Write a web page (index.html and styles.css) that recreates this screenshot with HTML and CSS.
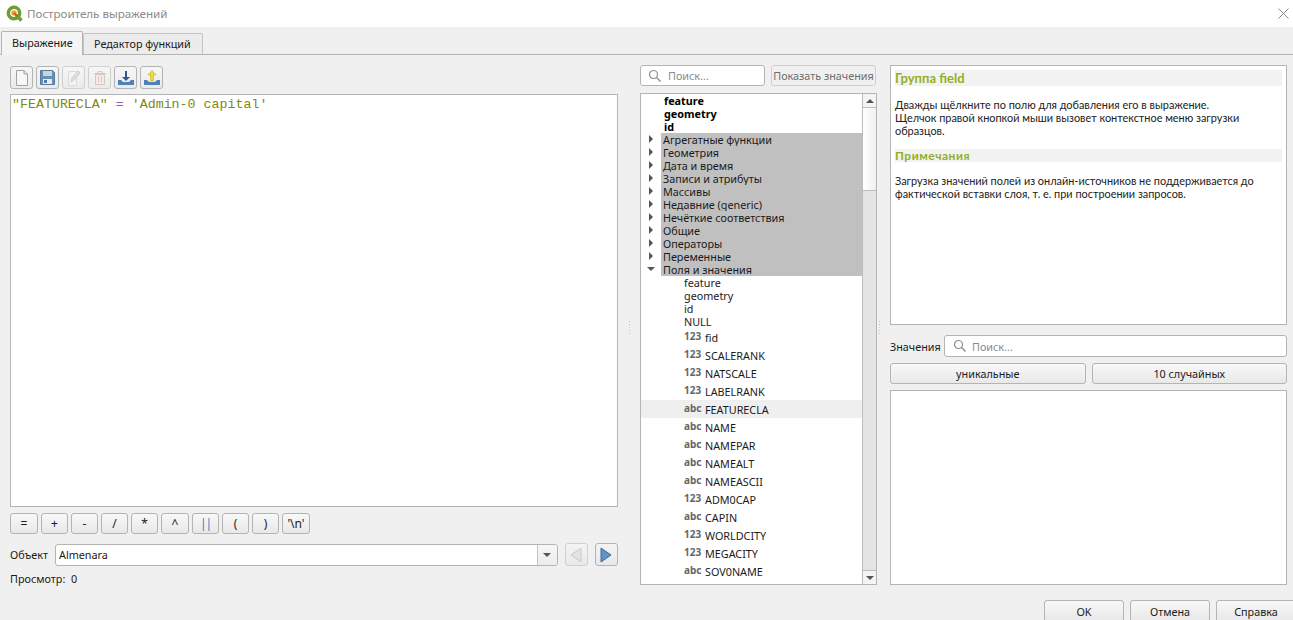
FILE: index.html
```html
<!DOCTYPE html>
<html lang="ru">
<head>
    <meta charset="UTF-8">
    <title>Построитель выражений</title>
    <link rel="stylesheet" href="styles.css">
</head>
<body>
    <div class="dialog">
        <!-- Заголовок окна -->
        <header class="titlebar">
            <svg class="logo" width="17" height="17" viewBox="0 0 17 17">
                <circle cx="8" cy="8" r="5.700" fill="#fff" stroke="#6f9e2e" stroke-width="3.400"/>
                <path d="M10 10l5.500 5.500" stroke="#6f9e2e" stroke-width="3.400"/>
                <circle cx="8" cy="8" r="2.800" fill="#e8a33d"/>
                <path d="M8 8l3 3" stroke="#c9473a" stroke-width="1.500"/>
            </svg>
            <span class="title">Построитель выражений</span>
            <svg class="close" width="11" height="11" viewBox="0 0 11 11">
                <path d="M0.500 0.500l10 10M10.500 0.500l-10 10" stroke="#8a8a8a" stroke-width="1" fill="none"/>
            </svg>
        </header>

        <nav class="tabs">
            <div class="tab active">Выражение</div>
            <div class="tab">Редактор функций</div>
        </nav>

        <main class="content">
            <!-- Редактор -->
            <section class="col-editor">
                <div class="toolbar">
                    <button class="tool" type="button">
                        <svg width="14" height="18" viewBox="0 0 14 18"><path d="M1.500 1.500h7.500l3.500 3.500v11.500h-11z" fill="#f7f7f7" stroke="#a2a2a2"/><path d="M9 1.500v3.500h3.500" fill="#e2e2e2" stroke="#a2a2a2"/></svg>
                    </button>
                    <button class="tool" type="button">
                        <svg width="17" height="17" viewBox="0 0 17 17"><path d="M1.500 1.500h12l2 2v12h-14z" fill="#6a8fb6" stroke="#557aa1"/><rect x="4" y="2" width="9" height="5" fill="#cdd3da"/><rect x="4" y="10" width="9" height="5" fill="#e9ecef"/><rect x="5" y="11" width="3" height="3" fill="#557aa1"/></svg>
                    </button>
                    <button class="tool off" type="button">
                        <svg width="15" height="18" viewBox="0 0 15 18"><path d="M2.500 2.500h8v14h-8z" fill="#f4f4f4" stroke="#dadada"/><path d="M5 13l1-4 6-7 2 2-6 7z" fill="#dedede" stroke="#cecece"/></svg>
                    </button>
                    <button class="tool off" type="button">
                        <svg width="16" height="18" viewBox="0 0 16 18"><path d="M2 4.500h12M6 4V2.500h4V4" fill="none" stroke="#d8c6c3"/><path d="M3.500 5.500h9v10h-9z" fill="#f2ecea" stroke="#d8c6c3"/><path d="M6.500 7.500v6M9.500 7.500v6" stroke="#d8c6c3"/></svg>
                    </button>
                    <button class="tool" type="button">
                        <svg width="18" height="18" viewBox="0 0 18 18"><path d="M8 2h2v6h3l-4 4-4-4h3z" fill="#2d5a8a"/><path d="M1 11h3l2 2h6l2-2h3v5H1z" fill="#4f82b6"/></svg>
                    </button>
                    <button class="tool" type="button">
                        <svg width="18" height="18" viewBox="0 0 18 18"><path d="M7.500 12V6H5l4-4.500L13 6h-2.500v6z" fill="#ecd93c" stroke="#b8a92c" stroke-width=".5"/><path d="M1 11h3l2 2h6l2-2h3v5H1z" fill="#4f82b6"/></svg>
                    </button>
                </div>

                <div class="editor"><span class="code-str">"FEATURECLA"</span> <span class="code-op">=</span> <span class="code-val">'Admin-0 capital'</span></div>

                <div class="ops">
                    <button class="op op-wide" type="button">=</button>
                    <button class="op" type="button">+</button>
                    <button class="op" type="button">-</button>
                    <button class="op" type="button">/</button>
                    <button class="op" type="button">*</button>
                    <button class="op op-wide" type="button">^</button>
                    <button class="op op-pipe" type="button">||</button>
                    <button class="op" type="button">(</button>
                    <button class="op" type="button">)</button>
                    <button class="op op-wide" type="button">'\n'</button>
                </div>

                <div class="feature-row">
                    <span>Объект</span>
                    <div class="combo">
                        <span class="combo-text">Almenara</span>
                        <span class="combo-btn"><i class="arrow-down"></i></span>
                    </div>
                    <button class="nav-btn off" type="button">
                        <svg width="12" height="16" viewBox="0 0 12 16"><path d="M11 1v14L1 8z" fill="#dfe3e6" stroke="#c6cace"/></svg>
                    </button>
                    <button class="nav-btn" type="button">
                        <svg width="12" height="16" viewBox="0 0 12 16"><path d="M1 1v14l10-7z" fill="#5f93c8" stroke="#3f6a99"/></svg>
                    </button>
                </div>

                <div class="preview">Просмотр:&nbsp; 0</div>
            </section>

            <div class="splitter"></div>

            <!-- Дерево функций -->
            <section class="col-tree">
                <div class="search-row">
                    <label class="search search-tree">
                        <svg width="14" height="14" viewBox="0 0 14 14"><circle cx="5.500" cy="5.500" r="4" fill="none" stroke="#8c8c8c" stroke-width="1.200"/><path d="M8.500 8.500l4 4" stroke="#8c8c8c" stroke-width="1.500"/></svg>
                        <span>Поиск...</span>
                    </label>
                    <button class="show-values" type="button">Показать значения</button>
                </div>

                <div class="tree">
                    <ul class="tree-list">
                        <li class="row lvl bold">feature</li>
                        <li class="row lvl bold">geometry</li>
                        <li class="row lvl bold">id</li>
                        <li class="row lvl group"><i class="arrow-right"></i><span>Агрегатные функции</span></li>
                        <li class="row lvl group"><i class="arrow-right"></i><span>Геометрия</span></li>
                        <li class="row lvl group"><i class="arrow-right"></i><span>Дата и время</span></li>
                        <li class="row lvl group"><i class="arrow-right"></i><span>Записи и атрибуты</span></li>
                        <li class="row lvl group"><i class="arrow-right"></i><span>Массивы</span></li>
                        <li class="row lvl group"><i class="arrow-right"></i><span>Недавние (generic)</span></li>
                        <li class="row lvl group"><i class="arrow-right"></i><span>Нечёткие соответствия</span></li>
                        <li class="row lvl group"><i class="arrow-right"></i><span>Общие</span></li>
                        <li class="row lvl group"><i class="arrow-right"></i><span>Операторы</span></li>
                        <li class="row lvl group"><i class="arrow-right"></i><span>Переменные</span></li>
                        <li class="row lvl group"><i class="arrow-open"></i><span>Поля и значения</span></li>
                        <li class="row sub">feature</li>
                        <li class="row sub">geometry</li>
                        <li class="row sub">id</li>
                        <li class="row sub">NULL</li>
                        <li class="field"><b>123</b>fid</li>
                        <li class="field"><b>123</b>SCALERANK</li>
                        <li class="field"><b>123</b>NATSCALE</li>
                        <li class="field"><b>123</b>LABELRANK</li>
                        <li class="field hover"><b>abc</b>FEATURECLA</li>
                        <li class="field"><b>abc</b>NAME</li>
                        <li class="field"><b>abc</b>NAMEPAR</li>
                        <li class="field"><b>abc</b>NAMEALT</li>
                        <li class="field"><b>abc</b>NAMEASCII</li>
                        <li class="field"><b>123</b>ADM0CAP</li>
                        <li class="field"><b>abc</b>CAPIN</li>
                        <li class="field"><b>123</b>WORLDCITY</li>
                        <li class="field"><b>123</b>MEGACITY</li>
                        <li class="field"><b>abc</b>SOV0NAME</li>
                    </ul>
                    <div class="scrollbar">
                        <span class="sb-btn sb-btn-up"><i class="arrow-up"></i></span>
                        <span class="sb-thumb"></span>
                        <span class="sb-track"></span>
                        <span class="sb-btn sb-btn-down"><i class="arrow-down"></i></span>
                    </div>
                </div>
            </section>

            <div class="splitter splitter-right"></div>

            <!-- Справка и значения -->
            <section class="col-help">
                <div class="help">
                    <h2>Группа field</h2>
                    <p>Дважды щёлкните по полю для добавления его в выражение.<br>Щелчок правой кнопкой мыши вызовет контекстное меню загрузки образцов.</p>
                    <h3>Примечания</h3>
                    <p>Загрузка значений полей из онлайн-источников не поддерживается до фактической вставки слоя, т. е. при построении запросов.</p>
                </div>

                <div class="values-row">
                    <span class="values-label">Значения</span>
                    <label class="search search-values">
                        <svg width="14" height="14" viewBox="0 0 14 14"><circle cx="5.500" cy="5.500" r="4" fill="none" stroke="#8c8c8c" stroke-width="1.200"/><path d="M8.500 8.500l4 4" stroke="#8c8c8c" stroke-width="1.500"/></svg>
                        <span>Поиск...</span>
                    </label>
                </div>

                <div class="values-btns">
                    <button class="btn" type="button">уникальные</button>
                    <button class="btn" type="button">10 случайных</button>
                </div>

                <div class="values-list"></div>
            </section>
        </main>

        <footer class="actions">
            <button class="btn btn-action" type="button">OK</button>
            <button class="btn btn-action" type="button">Отмена</button>
            <button class="btn btn-action" type="button">Справка</button>
        </footer>
    </div>
</body>
</html>
```

FILE: styles.css
```css
/* Общее */
html, body {
    margin: 0;
    padding: 0;
    height: 100%;
    overflow: hidden;
}

body {
    font-family: "Noto Sans", "Open Sans", sans-serif;
    font-size: 10.8px;
    color: #1a1a1a;
    background: #f0f0f0;
}

button {
    font: inherit;
    color: inherit;
    padding: 0;
    cursor: pointer;
}

.dialog {
    height: 620px;
    display: flex;
    flex-direction: column;
}

/* Заголовок окна */
.titlebar {
    height: 27px;
    flex: none;
    background: #fff;
    display: flex;
    align-items: center;
    padding: 0 4px 0 6px;
    box-sizing: border-box;
}

.title {
    margin-left: 4px;
    font-size: 11.6px;
    color: #8a8a8a;
    flex: 1;
}

/* Вкладки */
.tabs {
    height: 28px;
    flex: none;
    display: flex;
    align-items: flex-end;
    padding-left: 1px;
    border-bottom: 1px solid #b4b4b4;
    box-sizing: border-box;
}

.tab {
    height: 21px;
    line-height: 20px;
    padding-left: 10px;
    background: #ececec;
    border: 1px solid #c4c4c4;
    border-bottom: none;
    border-radius: 2px 2px 0 0;
    box-sizing: border-box;
    width: 120px;
    white-space: nowrap;
}

.tab.active {
    width: 82px;
    height: 24px;
    margin-bottom: -1px;
    line-height: 22px;
    background: #f4f4f4;
    border-color: #b4b4b4;
}

/* Колонки */
.content {
    flex: 1;
    min-height: 0;
    display: flex;
    padding: 10px 6px 0 10px;
}

.col-editor {
    width: 608px;
    flex: none;
    padding-top: 1px;
    display: flex;
    flex-direction: column;
}

.col-tree {
    width: 237px;
    flex: none;
    display: flex;
    flex-direction: column;
}

.col-help {
    flex: 1;
    min-width: 0;
    display: flex;
    flex-direction: column;
}

.splitter {
    width: 22px;
    flex: none;
    display: flex;
    align-items: center;
    justify-content: center;
}

.splitter::before {
    content: "";
    width: 1px;
    height: 14px;
    margin-bottom: 10px;
    background: repeating-linear-gradient(to bottom, #c4c4c4 0 1px, transparent 1px 3px);
}

.splitter-right {
    width: 13px;
    justify-content: flex-start;
    padding-left: 2px;
    box-sizing: border-box;
}

/* Панель инструментов */
.toolbar {
    display: flex;
    gap: 3px;
    height: 23px;
    flex: none;
}

.tool {
    width: 23px;
    height: 23px;
    background: linear-gradient(to bottom, #f6f6f6, #ebebeb);
    border: 1px solid #b4b4b4;
    border-radius: 3px;
    display: flex;
    align-items: center;
    justify-content: center;
}

.tool.off {
    border-color: #d0d0d0;
}

/* Редактор */
.editor {
    height: 413px;
    flex: none;
    margin-top: 5px;
    background: #fff;
    border: 1px solid #b4b4b4;
    box-sizing: border-box;
    padding: 2px 1px;
    font-family: "Liberation Mono", "DejaVu Sans Mono", monospace;
    font-size: 13.3px;
    line-height: 15px;
}

.code-str,
.code-val {
    color: #7f8a0c;
}

.code-op {
    color: #8e5fc0;
}

/* Кнопки операторов */
.ops {
    display: flex;
    gap: 3px;
    margin-top: 6px;
    flex: none;
}

.op {
    width: 27px;
    height: 21px;
    background: linear-gradient(to bottom, #f8f8f8, #e8e8e8);
    border: 1px solid #b4b4b4;
    border-radius: 3px;
    font-size: 12px;
}

.op-wide {
    width: 28px;
}

.op-pipe {
    color: #2f7fc4;
    letter-spacing: -1px;
}

/* Строка объекта */
.feature-row {
    display: flex;
    align-items: center;
    margin-top: 9px;
    flex: none;
}

.combo {
    width: 503px;
    height: 22px;
    margin-left: 7px;
    display: flex;
    background: #fff;
    border: 1px solid #b4b4b4;
    border-radius: 3px;
    box-sizing: border-box;
}

.combo-text {
    flex: 1;
    line-height: 20px;
    padding-left: 3px;
}

.combo-btn {
    width: 19px;
    border-left: 1px solid #c4c4c4;
    background: linear-gradient(to bottom, #f6f6f6, #ececec);
    border-radius: 0 3px 3px 0;
    display: flex;
    align-items: center;
    justify-content: center;
}

.nav-btn {
    width: 23px;
    height: 23px;
    margin-left: 7px;
    background: linear-gradient(to bottom, #f4f4f4, #e8e8e8);
    border: 1px solid #b4b4b4;
    border-radius: 3px;
    display: flex;
    align-items: center;
    justify-content: center;
}

.nav-btn.off {
    border-color: #d0d0d0;
}

.preview {
    margin-top: 5px;
    line-height: 15px;
    flex: none;
}

/* Стрелки */
.arrow-down,
.arrow-up,
.arrow-open {
    display: block;
    width: 0;
    height: 0;
    border-left: 4px solid transparent;
    border-right: 4px solid transparent;
}

.arrow-down,
.arrow-open {
    border-top: 4px solid #555;
}

.arrow-up {
    border-bottom: 4px solid #555;
}

.arrow-right {
    display: block;
    width: 0;
    height: 0;
    border-top: 4px solid transparent;
    border-bottom: 4px solid transparent;
    border-left: 4px solid #555;
}

/* Поиск */
.search {
    height: 21px;
    display: flex;
    align-items: center;
    gap: 6px;
    padding-left: 7px;
    background: #fff;
    border: 1px solid #b4b4b4;
    border-radius: 3px;
    box-sizing: border-box;
    color: #8a8a8a;
}

.search-tree {
    width: 125px;
}

.search-values {
    flex: 1;
    height: 22px;
    gap: 5px;
    padding-left: 8px;
}

.search-row {
    display: flex;
    gap: 6px;
    flex: none;
}

.show-values {
    width: 105px;
    height: 21px;
    color: #6e6e6e;
    background: #f0f0f0;
    border: 1px solid #cfcfcf;
    border-radius: 3px;
}

/* Дерево */
.tree {
    height: 492px;
    margin-top: 7px;
    display: flex;
    background: #fff;
    border: 1px solid #b4b4b4;
    box-sizing: border-box;
    flex: none;
}

.tree-list {
    list-style: none;
    margin: 0;
    padding: 0;
    flex: 1;
    min-width: 0;
    overflow: hidden;
}

.row {
    height: 13px;
    line-height: 13px;
    margin-top: 0;
}

.lvl {
    padding-left: 23px;
}

.bold {
    font-weight: 700;
    color: #000;
}

.group {
    position: relative;
    padding-left: 0;
    margin-left: 20px;
    background: #c0c0c0;
}

.group span {
    padding-left: 2px;
}

.group i {
    position: absolute;
    left: -12px;
    top: 2px;
}

.group .arrow-open {
    left: -14px;
    top: 4px;
}

.sub {
    padding-left: 43px;
}

.field {
    height: 18px;
    line-height: 20px;
    padding-left: 43px;
    display: flex;
}

.field b {
    width: 21px;
    flex: none;
    font-size: 10px;
    line-height: 17px;
    color: #666;
}

.field.hover {
    background: #efefef;
}

/* Полоса прокрутки */
.scrollbar {
    width: 14px;
    flex: none;
    display: flex;
    flex-direction: column;
    box-sizing: border-box;
    border-left: 1px solid #bcbcbc;
    background: #e4e4e4;
}

.sb-btn {
    height: 13px;
    flex: none;
    background: #f4f4f4;
    display: flex;
    align-items: center;
    justify-content: center;
}

.sb-btn-up {
    border-bottom: 1px solid #bcbcbc;
}

.sb-btn-down {
    border-top: 1px solid #bcbcbc;
}

.sb-thumb {
    height: 83px;
    flex: none;
    background: linear-gradient(to right, #fff, #f0f0f0);
    border-bottom: 1px solid #bcbcbc;
    box-sizing: border-box;
}

.sb-track {
    flex: 1;
}

/* Справка */
.help {
    height: 260px;
    flex: none;
    background: #fff;
    border: 1px solid #b4b4b4;
    box-sizing: border-box;
    padding: 4px 4px;
    font-family: Lato, "Noto Sans", sans-serif;
    font-size: 10.9px;
    line-height: 13px;
    color: #222;
}

.help h2 {
    margin: 0;
    height: 16px;
    line-height: 16px;
    font-size: 13px;
    font-weight: 700;
    color: #93b023;
    background: #f2f2f2;
}

.help h3 {
    margin: 12px 0 0;
    height: 13px;
    line-height: 13px;
    font-size: 12px;
    letter-spacing: .5px;
    font-weight: 700;
    color: #93b023;
    background: #f2f2f2;
}

.help p {
    margin: 12px 0 0;
}

.values-row {
    display: flex;
    align-items: center;
    gap: 6px;
    margin-top: 10px;
    flex: none;
}

.values-label {
    width: 48px;
    flex: none;
}

.values-btns {
    display: flex;
    gap: 6px;
    margin-top: 6px;
    flex: none;
}

.btn {
    height: 21px;
    background: linear-gradient(to bottom, #f8f8f8, #e8e8e8);
    border: 1px solid #b4b4b4;
    border-radius: 3px;
}

.values-btns .btn {
    flex: 1;
}

.values-list {
    height: 195px;
    margin-top: 6px;
    flex: none;
    background: #fff;
    border: 1px solid #b4b4b4;
    box-sizing: border-box;
}

/* Кнопки диалога */
.actions {
    height: 20px;
    flex: none;
    display: flex;
    justify-content: flex-end;
    gap: 6px;
    margin-right: -3px;
}

.btn-action {
    width: 80px;
    height: 22px;
    border-radius: 3px 3px 0 0;
}
```
